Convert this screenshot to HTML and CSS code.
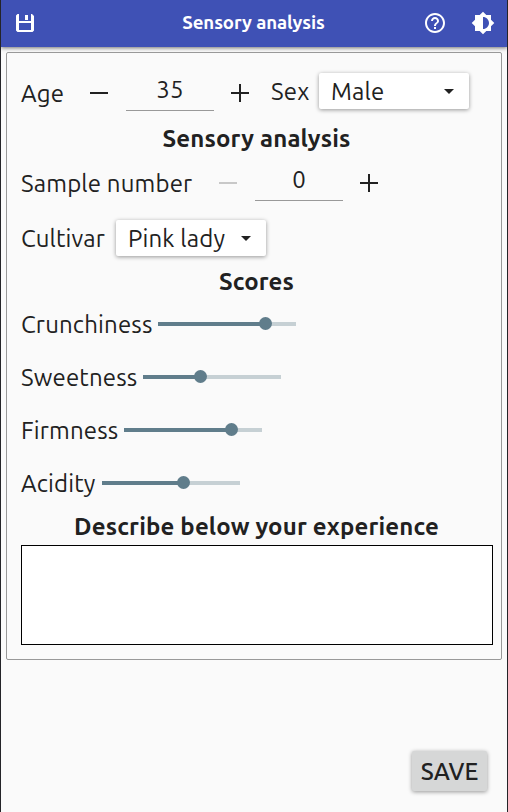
FILE: index.html
```html
<!DOCTYPE html>
<html lang="en">
<head>
<meta charset="utf-8">
<title>Sensory analysis</title>
<link rel="stylesheet" href="styles.css">
</head>
<body>
<header class="bar">
  <svg class="icon save-icon" viewBox="0 0 18 18"><path fill-rule="evenodd" d="M1.500 0H3v7h12V0h1l2 2v14.500L16.500 18h-15L0 16.500v-15zM3 9v7h12V9zM9 1h3v5H9z"/></svg>
  <h1>Sensory analysis</h1>
  <svg class="icon" viewBox="0 0 24 24"><path d="M11 18h2v-2h-2v2zm1-16C6.480 2 2 6.480 2 12s4.480 10 10 10 10-4.480 10-10S17.520 2 12 2zm0 18c-4.410 0-8-3.590-8-8s3.590-8 8-8 8 3.590 8 8-3.590 8-8 8zm0-14c-2.210 0-4 1.790-4 4h2c0-1.100.9-2 2-2s2 .9 2 2c0 2-3 1.750-3 5h2c0-2.250 3-2.500 3-5 0-2.210-1.790-4-4-4z"/></svg>
  <svg class="icon" viewBox="0 0 24 24"><path d="M20 15.310L23.310 12 20 8.690V4h-4.690L12 .69 8.690 4H4v4.690L.69 12 4 15.310V20h4.690L12 23.310 15.310 20H20v-4.690zM12 18V6c3.310 0 6 2.690 6 6s-2.690 6-6 6z"/></svg>
</header>
<main class="card">
  <div class="row person">
    <span class="label age">Age</span>
    <div class="spin"><i class="minus"></i><span class="value">35</span><i class="plus"></i></div>
    <span class="label sex">Sex</span>
    <div class="select"><span class="male">Male</span><i class="arrow"></i></div>
  </div>
  <h2 class="h-analysis">Sensory analysis</h2>
  <div class="row sample">
    <span class="label number">Sample number</span>
    <div class="spin"><i class="minus off"></i><span class="value">0</span><i class="plus"></i></div>
  </div>
  <div class="row variety">
    <span class="label cultivar">Cultivar</span>
    <div class="select"><span class="pink">Pink lady</span><i class="arrow"></i></div>
  </div>
  <h2 class="h-scores">Scores</h2>
  <div class="row score"><span class="label crunchiness">Crunchiness</span><div class="track"><div class="fill" style="width:107px"></div></div></div>
  <div class="row score"><span class="label sweetness">Sweetness</span><div class="track"><div class="fill" style="width:57px"></div></div></div>
  <div class="row score"><span class="label firmness">Firmness</span><div class="track"><div class="fill" style="width:107px"></div></div></div>
  <div class="row score"><span class="label acidity">Acidity</span><div class="track"><div class="fill" style="width:81px"></div></div></div>
  <h2 class="h-describe">Describe below your experience</h2>
  <div class="notes"></div>
</main>
<footer><button class="save"><span>SAVE</span></button></footer>
</body>
</html>
```
FILE: styles.css
```css
* { box-sizing: border-box; }
body {
  margin: 0;
  height: 812px;
  border: solid #242428;
  border-width: 0 1px;
  background: #fafafa;
  color: #212121;
  font: 24px/32px Ubuntu, "Noto Sans", sans-serif;
  letter-spacing: .16px;
  white-space: nowrap;
  overflow: hidden;
}
.bar {
  display: flex;
  align-items: center;
  height: 47px;
  padding: 0 12px 2px 15px;
  background: #3f51b5;
  color: #fff;
  box-shadow: 0 1px 4px rgba(0, 0, 0, .55);
}
.bar h1 {
  flex: 1;
  margin: 0 0 0 50px;
  text-align: center;
  font-size: 18.670px;
  letter-spacing: -.1px;
}
.icon { width: 24px; height: 24px; fill: #fff; }
.icon + .icon { margin-left: 24px; }
.save-icon { width: 18px; height: 18px; }
.card {
  height: 608px;
  margin: 5px 5px 0;
  padding: 0 8px 0 14px;
  border: 1px solid #999;
  border-radius: 2px;
}
.row { display: flex; align-items: center; }
.label { flex: none; padding-top: 2px; }
.person { height: 73px; padding-top: 7px; }
.sample { height: 59px; padding-top: 3px; }
.variety { height: 54px; }
.score { height: 53px; }
.age { width: 69px; }
.sex { width: 48px; margin: -4px 0 0 23px; }
.number { width: 198px; }
.cultivar { width: 95px; }
.crunchiness { width: 137px; }
.sweetness { width: 122px; }
.firmness { width: 103px; }
.acidity { width: 81px; }
.spin { display: flex; align-items: center; }
.minus, .plus { flex: none; width: 18px; height: 2px; background: #212121; }
.off { background: #c8c8c8; }
.plus {
  height: 18px;
  margin-right: -1px;
  background:
    linear-gradient(#212121, #212121) center / 18px 2px no-repeat,
    linear-gradient(#212121, #212121) center / 2px 18px no-repeat;
}
.value {
  width: 88px;
  height: 40px;
  margin: 0 17px 0 18px;
  padding-top: 3px;
  border-bottom: 1px solid #999;
  text-align: center;
  transform: translateY(-2px);
}
.select {
  display: flex;
  align-items: center;
  justify-content: space-between;
  width: 150px;
  height: 36px;
  padding: 0 15px 0 12px;
  border-radius: 2px;
  background: #fff;
  box-shadow: 0 1px 4px rgba(0, 0, 0, .4);
}
.select span { padding-top: 2px; }
.person .select { margin-top: -4px; }
.arrow { border: solid transparent; border-width: 5px 5px 0; border-top-color: #212121; }
h2 {
  margin: 0 1px 0 0;
  font-size: 24px;
  line-height: 25px;
  height: 26px;
  text-align: center;
}
.h-scores { height: 32px; line-height: 34px; }
.h-describe { height: 36px; line-height: 36px; }
.track { width: 138px; height: 4px; background: #c6d0d4; }
.fill { position: relative; height: 4px; background: #607d8b; }
.fill::after {
  content: "";
  position: absolute;
  right: -6.500px;
  top: -4.500px;
  width: 13px;
  height: 13px;
  border-radius: 50%;
  background: #607d8b;
}
.notes { width: 472px; height: 100px; border: 1px solid #000; background: #fff; }
footer { display: flex; justify-content: flex-end; padding: 91px 20px 0; }
.save {
  width: 75px;
  height: 40px;
  padding: 2px 0 0;
  border: 0;
  border-radius: 2px;
  background: #d6d7d7;
  color: #212121;
  font: 500 24px/38px Ubuntu, "Noto Sans", sans-serif;
  box-shadow: 0 1px 4px rgba(0, 0, 0, .4);
}
```
